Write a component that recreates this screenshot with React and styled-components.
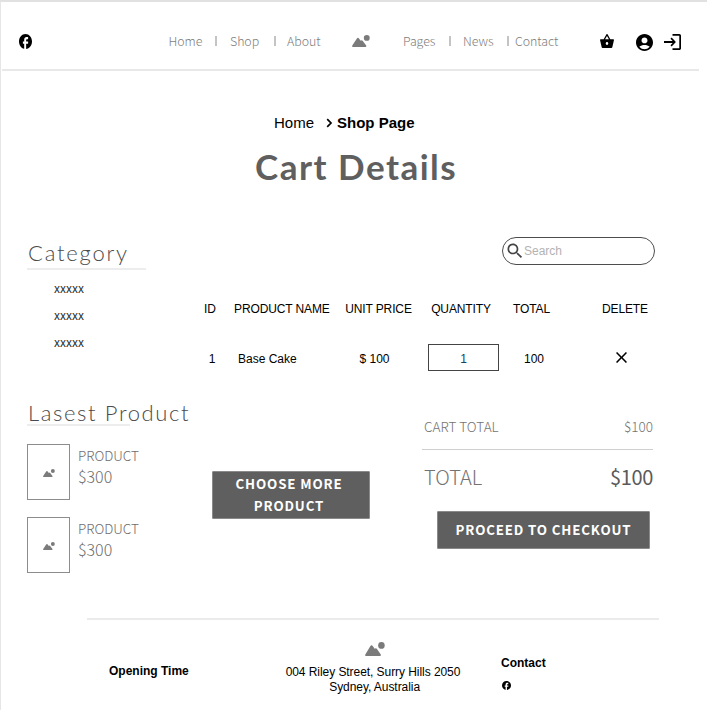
import React from "react";
import styled, { createGlobalStyle } from "styled-components";

const light = `"Noto Sans CJK SC", "Open Sans", sans-serif`;
const lato = `Lato, sans-serif`;
const arial = `"Liberation Sans", Arial, sans-serif`;

const GlobalStyle = createGlobalStyle`
  * { box-sizing: border-box; }
  body { margin: 0; background: #fff; overflow: hidden; }
  a { color: inherit; text-decoration: none; }
  h1, h2, p, ul { margin: 0; padding: 0; list-style: none; }
`;

const Page = styled.div`
  width: 707px;
  height: 710px;
  display: flex;
  flex-direction: column;
  border-top: 2px solid #e1e1e1;
  border-left: 1px solid #e6e6e6;
  background: #fff;
  font-family: ${arial};
  font-size: 12px;
  color: #000;
  overflow: hidden;
`;

const Header = styled.header`
  width: 697px;
  height: 69px;
  margin-left: 1px;
  border-bottom: 2px solid #e8e8e8;
  display: grid;
  grid-template-columns: 17px 149.5px 46.5px 15px 44px 13px 65px 51px 46px 14px 44px 8px 85px 36px 27.5px 20px;
  align-items: center;
  padding-top: 12px;
`;

const NavLink = styled.a`
  grid-column: ${(p) => p.$col};
  font-family: ${light};
  font-weight: 300;
  font-size: 12.4px;
  line-height: 20px;
  letter-spacing: -0.05px;
  color: #7d7d7d;
  white-space: nowrap;
`;

const Divider = styled.span`
  grid-column: ${(p) => p.$col};
  width: 2px;
  height: 10px;
  background: #c4c4c4;
`;

const Slot = styled.span`
  grid-column: ${(p) => p.$col};
  display: flex;
  padding-top: ${(p) => p.$down || 0}px;
`;

const Glyph = styled.svg`
  display: block;
  flex: none;
  fill: ${(p) => p.$color || "#000"};
`;

const Breadcrumb = styled.nav`
  display: flex;
  align-items: center;
  margin: 43px 0 0 273px;
  height: 18px;
  font-size: 15px;
  line-height: 18px;
  white-space: nowrap;
`;

const Crumb = styled.a`
  width: 52px;
`;

const CurrentCrumb = styled.strong`
  margin-left: 4px;
`;

const Title = styled.h1`
  margin: 10px 0 0 254px;
  height: 48px;
  font: 700 35px/48px ${lato};
  letter-spacing: 1.5px;
  color: #5f5f5f;
  white-space: nowrap;
`;

const Body = styled.main`
  display: grid;
  grid-template-columns: 174px 1fr;
  height: 385px;
  margin: 45px 0 0 26px;
`;

const Sidebar = styled.aside`
  display: flex;
  flex-direction: column;
  align-items: flex-start;
`;

const SideHeading = styled.h2`
  width: ${(p) => p.$line}px;
  height: ${(p) => p.$h}px;
  padding-top: ${(p) => p.$down || 0}px;
  padding-left: 1px;
  border-bottom: 2px solid #ededed;
  font: 300 22px/28px ${lato};
  letter-spacing: ${(p) => p.$spacing};
  color: #4a4a4a;
  white-space: nowrap;
`;

const CategoryList = styled.ul`
  padding: 4px 0 0 27px;
  height: 129px;
`;

const CategoryItem = styled.li`
  height: 27px;
  font: 400 12px/27px ${light};
  color: #333;
`;

const ProductRow = styled.div`
  display: flex;
  gap: 8px;
  height: 55px;
  margin-top: 18px;
`;

const Thumb = styled.div`
  width: 43px;
  height: 56px;
  border: 1px solid #8c8c8c;
  display: flex;
  align-items: center;
  justify-content: center;
  padding-top: 3px;
`;

const ProductText = styled.div`
  font-family: ${light};
  font-weight: 300;
  color: #6d6d6d;
  white-space: nowrap;
`;

const ProductName = styled.p`
  font-size: 13.5px;
  line-height: 23px;
`;

const ProductPrice = styled.p`
  font-size: 16px;
  line-height: 19px;
`;

const Content = styled.section`
  display: flex;
  flex-direction: column;
`;

const Search = styled.label`
  width: 153px;
  height: 28px;
  margin: 2px 0 0 301px;
  border: 1px solid #4d4d4d;
  border-radius: 15px;
  display: flex;
  align-items: center;
  padding-left: 2px;
`;

const SearchInput = styled.input`
  width: 110px;
  padding: 0;
  margin-left: -1px;
  border: 0;
  outline: 0;
  background: transparent;
  font: 12px/14px ${arial};
  &::placeholder { color: #b3b3b3; opacity: 1; }
`;

const CartRow = styled.div`
  display: grid;
  grid-template-columns: 18px 105px 97px 78px 65px 38px 1fr;
  align-items: center;
  height: ${(p) => p.$h}px;
  margin-top: ${(p) => p.$top}px;
  line-height: 14px;
  letter-spacing: ${(p) => p.$spacing || "normal"};
  white-space: nowrap;
`;

const Cell = styled.span`
  display: flex;
  align-items: center;
  justify-content: ${(p) => p.$align || "center"};
  padding-left: ${(p) => p.$left || 0}px;
  padding-top: ${(p) => p.$down || 0}px;
`;

const Quantity = styled.span`
  width: 71px;
  height: 27px;
  border: 1px solid #444;
  display: flex;
  align-items: center;
  justify-content: center;
  padding-top: 3px;
  color: #16435e;
`;

const Actions = styled.div`
  display: flex;
  margin-top: 42px;
`;

const Button = styled.button`
  width: ${(p) => p.$w}px;
  height: ${(p) => p.$h}px;
  margin: ${(p) => p.$margin};
  padding: 0 ${(p) => p.$right || 0}px 0 0;
  border: 1px solid #8a8a8a;
  border-radius: 1px;
  background: #5f5f5f;
  color: #fff;
  font: 700 13.3px/22px ${light};
  letter-spacing: 0.85px;
`;

const Summary = styled.div`
  width: 232px;
  margin-left: 52px;
`;

const SummaryLine = styled.div`
  display: flex;
  justify-content: space-between;
  width: 231px;
  height: ${(p) => p.$h}px;
  padding-left: 2px;
  border-bottom: ${(p) => (p.$rule ? "1px solid #cfcfcf" : "0")};
  font: 300 ${(p) => p.$size}px/${(p) => p.$lh}px ${light};
  color: #737373;
`;

const Amount = styled.span`
  font-weight: ${(p) => (p.$strong ? 400 : 300)};
  letter-spacing: ${(p) => (p.$strong ? "-0.35px" : "0")};
  color: ${(p) => (p.$strong ? "#5a5a5a" : "#737373")};
`;

const Footer = styled.footer`
  width: 572px;
  height: 92px;
  margin-left: 86px;
  border-top: 2px solid #ebebeb;
  display: grid;
  grid-template-columns: 175px 222px 1fr;
  line-height: 15px;
`;

const FooterTitle = styled.strong`
  display: block;
  padding: ${(p) => p.$pad};
`;

const Address = styled.div`
  display: flex;
  flex-direction: column;
  align-items: center;
  padding-top: 22px;
  text-align: center;
  white-space: nowrap;
`;

const AddressLogo = styled.div`
  padding-left: 4px;
`;

const AddressText = styled.p`
  margin-top: 9px;
  letter-spacing: -0.06px;
`;

const Mountains = ({ w, h }) => (
  <Glyph width={w} height={h} viewBox="0 0 19 13" preserveAspectRatio="none" $color="#7b7b7b">
    <path d="M0.8 13Q-0.2 12.7 0.3 11.5L5 4Q6.3 2.2 7.5 4L9.2 6.3Q10.5 5.2 11.4 6.5L15 11.5Q15.4 12.7 14.3 13Z" />
    <circle cx="15.6" cy="3.2" r="3.1" />
  </Glyph>
);

const Facebook = ({ w, h }) => (
  <Glyph width={w} height={h} viewBox="2 2 20 20" preserveAspectRatio="none">
    <path d="M22 12c0-5.52-4.48-10-10-10S2 6.48 2 12c0 4.84 3.44 8.87 8 9.8V15H8v-3h2V9.5C10 7.57 11.57 6 13.5 6H16v3h-2c-.55 0-1 .45-1 1v2h3v3h-3v6.95c5.05-.5 9-4.76 9-9.95z" />
  </Glyph>
);

const Basket = () => (
  <Glyph width="14" height="14" viewBox="1 2 22 19" preserveAspectRatio="none">
    <path d="M17.21 9l-4.38-6.56a.993.993 0 0 0-1.66.001L6.79 9H2c-.55 0-1 .45-1 1 0 .09.01.18.04.27l2.54 9.27c.23.84 1 1.46 1.92 1.46h13c.92 0 1.69-.62 1.93-1.46l2.54-9.27L23 10c0-.55-.45-1-1-1h-4.79zM9 9l3-4.4L15 9H9zm3 8c-1.1 0-2-.9-2-2s.9-2 2-2 2 .9 2 2-.9 2-2 2z" />
  </Glyph>
);

const Account = () => (
  <Glyph width="17" height="17" viewBox="2 2 20 20">
    <path d="M12 2C6.48 2 2 6.48 2 12s4.48 10 10 10 10-4.48 10-10S17.52 2 12 2zm0 4c1.93 0 3.5 1.57 3.5 3.5S13.93 13 12 13s-3.5-1.57-3.5-3.5S10.07 6 12 6zm0 14c-2.03 0-4.43-.82-6.14-2.88C7.55 15.8 9.68 15 12 15s4.45.8 6.14 2.12C16.43 19.18 14.03 20 12 20z" />
  </Glyph>
);

const Login = () => (
  <Glyph width="17" height="16" viewBox="2 3 20 18" preserveAspectRatio="none">
    <path d="M11 7 9.6 8.4l2.6 2.6H2v2h10.2l-2.6 2.6L11 17l5-5-5-5zm9 12h-8v2h8c1.1 0 2-.9 2-2V5c0-1.1-.9-2-2-2h-8v2h8v14z" />
  </Glyph>
);

const SearchIcon = () => (
  <Glyph width="20" height="20" viewBox="0 0 24 24" $color="#444">
    <path d="M15.5 14h-.79l-.28-.27C15.41 12.59 16 11.11 16 9.5 16 5.91 13.09 3 9.5 3S3 5.91 3 9.5 5.91 16 9.5 16c1.61 0 3.09-.59 4.23-1.57l.27.28v.79l5 4.99L20.49 19l-4.99-5zm-6 0C7.01 14 5 11.99 5 9.5S7.01 5 9.5 5 14 7.01 14 9.5 11.99 14 9.5 14z" />
  </Glyph>
);

const Close = () => (
  <Glyph width="11" height="11" viewBox="5 5 14 14">
    <path d="M19 6.41 17.59 5 12 10.59 6.41 5 5 6.41 10.59 12 5 17.59 6.41 19 12 13.41 17.59 19 19 17.59 13.41 12z" />
  </Glyph>
);

const Chevron = () => (
  <Glyph width="7" height="10" viewBox="0 0 7 10" $color="none">
    <path d="M1.2 1.2 5 5 1.2 8.8" stroke="#000" strokeWidth="1.7" />
  </Glyph>
);

const Product = () => (
  <ProductRow>
    <Thumb><Mountains w={12} h={8} /></Thumb>
    <ProductText>
      <ProductName>PRODUCT</ProductName>
      <ProductPrice>$300</ProductPrice>
    </ProductText>
  </ProductRow>
);

export default function App() {
  return (
    <Page>
      <GlobalStyle />
      <Header>
        <Slot $col={2}><Facebook w={13} h={15} /></Slot>
        <NavLink $col={3} href="#">Home</NavLink>
        <Divider $col={4} />
        <NavLink $col={5} href="#">Shop</NavLink>
        <Divider $col={6} />
        <NavLink $col={7} href="#">About</NavLink>
        <Slot $col={8}><Mountains w={18} h={12} /></Slot>
        <NavLink $col={9} href="#">Pages</NavLink>
        <Divider $col={10} />
        <NavLink $col={11} href="#">News</NavLink>
        <Divider $col={12} />
        <NavLink $col={13} href="#">Contact</NavLink>
        <Slot $col={14}><Basket /></Slot>
        <Slot $col={15} $down={2}><Account /></Slot>
        <Slot $col={16} $down={2}><Login /></Slot>
      </Header>

      <Breadcrumb>
        <Crumb href="#">Home</Crumb>
        <Chevron />
        <CurrentCrumb>Shop Page</CurrentCrumb>
      </Breadcrumb>
      <Title>Cart Details</Title>

      <Body>
        <Sidebar>
          <SideHeading $line={119} $h={35} $down={4} $spacing="1.8px">Category</SideHeading>
          <CategoryList>
            <CategoryItem>xxxxx</CategoryItem>
            <CategoryItem>xxxxx</CategoryItem>
            <CategoryItem>xxxxx</CategoryItem>
          </CategoryList>
          <SideHeading $line={103} $h={27} $spacing="1.62px">Lasest Product</SideHeading>
          <Product />
          <Product />
        </Sidebar>

        <Content>
          <Search>
            <SearchIcon />
            <SearchInput placeholder="Search" />
          </Search>
          <CartRow $h={14} $top={37} $spacing="-0.12px">
            <Cell>ID</Cell>
            <Cell $align="flex-start" $left={15}>PRODUCT NAME</Cell>
            <Cell $left={12}>UNIT PRICE</Cell>
            <Cell $left={2}>QUANTITY</Cell>
            <Cell>TOTAL</Cell>
            <Cell />
            <Cell $align="flex-start">DELETE</Cell>
          </CartRow>
          <CartRow $h={27} $top={28}>
            <Cell $left={4} $down={3}>1</Cell>
            <Cell $align="flex-start" $left={19} $down={3}>Base Cake</Cell>
            <Cell $left={4} $down={3}>$ 100</Cell>
            <Cell $align="flex-end"><Quantity>1</Quantity></Cell>
            <Cell $left={5} $down={3}>100</Cell>
            <Cell />
            <Cell $align="flex-start" $left={14}><Close /></Cell>
          </CartRow>
          <Actions>
            <Button $w={158} $h={48} $margin="58px 0 0 11px" $right={4}>CHOOSE MORE<br />PRODUCT</Button>
            <Summary>
              <SummaryLine $rule $h={37} $size={13.5} $lh={27}>
                <span>CART TOTAL</span>
                <Amount>$100</Amount>
              </SummaryLine>
              <SummaryLine $h={61} $size={20} $lh={54}>
                <span>TOTAL</span>
                <Amount $strong>$100</Amount>
              </SummaryLine>
              <Button $w={213} $h={38} $margin="0 0 0 15px">PROCEED TO CHECKOUT</Button>
            </Summary>
          </Actions>
        </Content>
      </Body>

      <Footer>
        <FooterTitle $pad="44px 0 0 22px">Opening Time</FooterTitle>
        <Address>
          <AddressLogo><Mountains w={20} h={14} /></AddressLogo>
          <AddressText>004 Riley Street, Surry Hills 2050<br />&nbsp;Sydney, Australia</AddressText>
        </Address>
        <div>
          <FooterTitle $pad="36px 0 10px 17px">Contact</FooterTitle>
          <FooterTitle as="a" href="#" $pad="0 0 0 18px"><Facebook w={9} h={9} /></FooterTitle>
        </div>
      </Footer>
    </Page>
  );
}
